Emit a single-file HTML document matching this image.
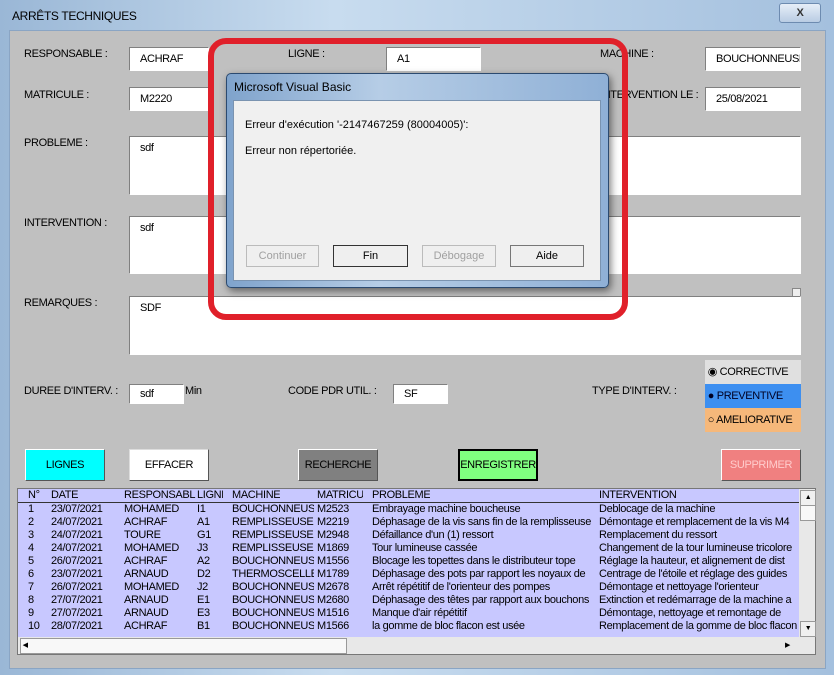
<!DOCTYPE html><html><head><style>
body{margin:0;width:834px;height:675px;overflow:hidden;background:#a9c3de;font-family:"Liberation Sans",sans-serif;font-size:11px;letter-spacing:-0.35px;color:#000;position:relative}
.a{position:absolute}
.in{position:absolute;background:#fff;border-top:1px solid #808080;border-left:1px solid #808080;border-bottom:1px solid #fff;border-right:1px solid #fff;box-sizing:border-box;padding:5px 10px;white-space:nowrap;overflow:hidden}
.btn{position:absolute;box-sizing:border-box;border:1px solid #fff;border-right-color:#555;border-bottom-color:#555;text-align:center;line-height:30px;height:32px}
.db{position:absolute;top:245px;height:22px;box-sizing:border-box;border:1px solid #777;background:#efefef;text-align:center;line-height:20px;font-size:11px;letter-spacing:0}
.row{position:absolute;left:18px;width:780px;height:13px;line-height:13px;white-space:nowrap}
.row span{position:absolute;overflow:hidden}
.dlg{letter-spacing:0}
</style></head><body>
<div class="a" style="left:0;top:0;width:834px;height:675px;background:linear-gradient(90deg,#9ab7d6,#c8dcef 40%,#a4c0de)"></div>
<div class="a" style="left:12px;top:9px;font-size:12px">ARRÊTS TECHNIQUES</div>
<div class="a" style="left:779px;top:3px;width:40px;height:18px;border:1px solid #6d8bb0;border-radius:3px;background:linear-gradient(#e6eef8,#b9cce3);text-align:center;font-weight:bold;line-height:18px;color:#333">X</div>
<div class="a" style="left:9px;top:30px;width:815px;height:637px;background:#c0c0c0;border:1px solid #8aa5c4"></div>

<div class="a" style="left:24px;top:48px">RESPONSABLE :</div><div class="in" style="left:129px;top:47px;width:80px;height:24px">ACHRAF</div>
<div class="a" style="left:288px;top:48px">LIGNE :</div><div class="in" style="left:386px;top:47px;width:95px;height:24px">A1</div>
<div class="a" style="left:600px;top:48px">MACHINE :</div><div class="in" style="left:705px;top:47px;width:96px;height:24px;padding-left:10px">BOUCHONNEUSE</div>
<div class="a" style="left:24px;top:89px">MATRICULE :</div><div class="in" style="left:129px;top:87px;width:80px;height:24px">M2220</div>
<div class="a" style="left:600px;top:89px">INTERVENTION LE :</div><div class="in" style="left:705px;top:87px;width:96px;height:24px">25/08/2021</div>
<div class="a" style="left:24px;top:137px">PROBLEME :</div><div class="in" style="left:129px;top:136px;width:672px;height:59px">sdf</div>
<div class="a" style="left:24px;top:217px">INTERVENTION :</div><div class="in" style="left:129px;top:216px;width:672px;height:58px">sdf</div>
<div class="a" style="left:792px;top:288px;width:7px;height:7px;background:#eee;border:1px solid #888"></div>
<div class="a" style="left:24px;top:297px">REMARQUES :</div><div class="in" style="left:129px;top:296px;width:672px;height:59px">SDF</div>
<div class="a" style="left:24px;top:385px">DUREE D'INTERV. :</div><div class="in" style="left:129px;top:384px;width:55px;height:20px;padding-top:3px">sdf</div><div class="a" style="left:185px;top:385px">Min</div>
<div class="a" style="left:288px;top:385px">CODE PDR UTIL. :</div><div class="in" style="left:393px;top:384px;width:55px;height:20px;padding-top:3px">SF</div>
<div class="a" style="left:592px;top:385px">TYPE D'INTERV. :</div>
<div class="a" style="left:705px;top:360px;width:96px;height:24px;background:#e0e0e0;line-height:24px">&nbsp;◉ CORRECTIVE</div>
<div class="a" style="left:705px;top:384px;width:96px;height:24px;background:#3d8ff0;line-height:24px;color:#002">&nbsp;● PREVENTIVE</div>
<div class="a" style="left:705px;top:408px;width:96px;height:24px;background:#f6b87a;line-height:24px">&nbsp;○ AMELIORATIVE</div>

<div class="btn" style="left:25px;top:449px;width:80px;background:#00ffff">LIGNES</div>
<div class="btn" style="left:129px;top:449px;width:80px;background:#fff;border-color:#ddd #555 #555 #ddd">EFFACER</div>
<div class="btn" style="left:298px;top:449px;width:80px;background:#808080">RECHERCHE</div>
<div class="btn" style="left:458px;top:449px;width:80px;background:#80ff80;border:2px solid #000;line-height:28px">ENREGISTRER</div>
<div class="btn" style="left:721px;top:449px;width:80px;background:#f08080;color:#fcc">SUPPRIMER</div>

<div class="a" style="left:17px;top:488px;width:799px;height:167px;background:#c8c8ff;border:1px solid #777;box-sizing:border-box"></div>
<div class="a" style="left:18px;top:502px;width:781px;height:1px;background:#333"></div>
<div class="a" style="left:799px;top:489px;width:16px;height:148px;background:#e8e8e8"></div>
<div class="a" style="left:800px;top:490px;width:14px;height:14px;background:#f0f0f0;border:1px solid #999;font-size:7px;text-align:center;line-height:14px">▲</div>
<div class="a" style="left:800px;top:505px;width:14px;height:14px;background:#f8f8f8;border:1px solid #999"></div>
<div class="a" style="left:800px;top:621px;width:14px;height:14px;background:#f0f0f0;border:1px solid #999;font-size:7px;text-align:center;line-height:14px">▼</div>
<div class="a" style="left:18px;top:637px;width:797px;height:17px;background:#e8e8e8"></div>
<div class="a" style="left:20px;top:638px;width:325px;height:14px;background:#f8f8f8;border:1px solid #999;font-size:7px;line-height:14px">&nbsp;◀</div>
<div class="a" style="left:785px;top:638px;font-size:7px;line-height:16px">▶</div>

<div class="row" style="top:489px"><span style="left:10px">N°</span><span style="left:33px">DATE</span><span style="left:106px;width:72px">RESPONSABL</span><span style="left:179px;width:26px">LIGNE</span><span style="left:214px">MACHINE</span><span style="left:299px;width:46px">MATRICULE</span><span style="left:354px">PROBLEME</span><span style="left:581px">INTERVENTION</span></div>
<div id="rows"></div>
<script>
var d=[["1","23/07/2021","MOHAMED","I1","BOUCHONNEUSE","M2523","Embrayage machine boucheuse","Deblocage de la machine"],
["2","24/07/2021","ACHRAF","A1","REMPLISSEUSE","M2219","Déphasage de la vis sans fin de la remplisseuse","Démontage et remplacement de la vis M4"],
["3","24/07/2021","TOURE","G1","REMPLISSEUSE","M2948","Défaillance d'un (1) ressort","Remplacement du ressort"],
["4","24/07/2021","MOHAMED","J3","REMPLISSEUSE","M1869","Tour lumineuse cassée","Changement de la tour lumineuse tricolore"],
["5","26/07/2021","ACHRAF","A2","BOUCHONNEUSE","M1556","Blocage les topettes dans le distributeur tope","Réglage la hauteur, et alignement de dist"],
["6","23/07/2021","ARNAUD","D2","THERMOSCELLE","M1789","Déphasage des pots par rapport les noyaux de","Centrage de l'étoile et réglage des guides"],
["7","26/07/2021","MOHAMED","J2","BOUCHONNEUSE","M2678","Arrêt répétitif de l'orienteur des pompes","Démontage et nettoyage l'orienteur"],
["8","27/07/2021","ARNAUD","E1","BOUCHONNEUSE","M2680","Déphasage des têtes par rapport aux bouchons","Extinction et redémarrage de la machine a"],
["9","27/07/2021","ARNAUD","E3","BOUCHONNEUSE","M1516","Manque d'air répétitif","Démontage, nettoyage et remontage de"],
["10","28/07/2021","ACHRAF","B1","BOUCHONNEUSE","M1566","la gomme de bloc flacon est usée","Remplacement de la gomme de bloc flacon"]];
var x=[[10,20],[33,70],[106,72],[179,30],[214,82],[299,52],[354,224],[581,200]],h="";
d.forEach(function(r,i){h+='<div class="row" style="top:'+(503+i*13)+'px">';r.forEach(function(c,j){h+='<span style="left:'+x[j][0]+'px;width:'+x[j][1]+'px">'+c+'</span>'});h+='</div>'});
document.getElementById('rows').innerHTML=h;
</script>

<div class="a" style="left:208px;top:38px;width:408px;height:270px;border:6px solid #e0202a;border-radius:18px"></div>
<div class="dlg">
<div class="a" style="left:226px;top:73px;width:381px;height:213px;border:1px solid #2b4a70;border-radius:5px;background:linear-gradient(90deg,#7fa3cc,#b6cde6 40%,#8fb0d6);box-shadow:2px 3px 8px rgba(0,0,0,.5)"></div>
<div class="a" style="left:234px;top:80px;font-size:12px">Microsoft Visual Basic</div>
<div class="a" style="left:233px;top:100px;width:366px;height:179px;background:#f0f0f0;border:1px solid #7a93b0"></div>
<div class="a" style="left:245px;top:119px">Erreur d'exécution '-2147467259 (80004005)':</div>
<div class="a" style="left:245px;top:145px">Erreur non répertoriée.</div>
<div class="db" style="left:246px;width:73px;color:#a0a0a0;border-color:#bbb">Continuer</div>
<div class="db" style="left:333px;width:75px;border-color:#333">Fin</div>
<div class="db" style="left:422px;width:74px;color:#a0a0a0;border-color:#bbb">Débogage</div>
<div class="db" style="left:510px;width:74px">Aide</div>
</div>
</body></html>
